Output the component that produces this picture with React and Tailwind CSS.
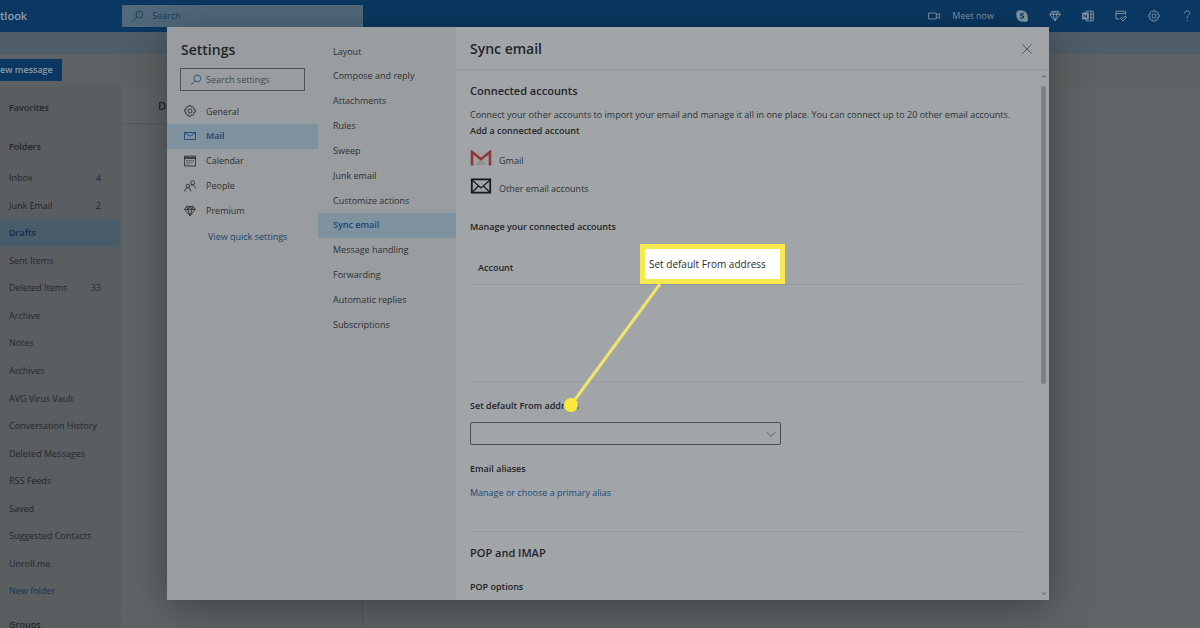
import React from 'react';

const folders = [
  { name: 'Inbox', count: 4, bold: true },
  { name: 'Junk Email', count: 2 },
  { name: 'Drafts', active: true },
  { name: 'Sent Items' },
  { name: 'Deleted Items', count: 33, dark: true },
  { name: 'Archive' },
  { name: 'Notes' },
  { name: 'Archives' },
  { name: 'AVG Virus Vault' },
  { name: 'Conversation History' },
  { name: 'Deleted Messages' },
  { name: 'RSS Feeds' },
  { name: 'Saved' },
  { name: 'Suggested Contacts' },
  { name: 'Unroll.me' },
  { name: 'New folder', link: true },
];

const mailSections = [
  'Layout',
  'Compose and reply',
  'Attachments',
  'Rules',
  'Sweep',
  'Junk email',
  'Customize actions',
  'Sync email',
  'Message handling',
  'Forwarding',
  'Automatic replies',
  'Subscriptions',
];

const Icon = ({ children, className = 'w-3 h-3', ...rest }) => (
  <svg viewBox="0 0 12 12" fill="none" stroke="currentColor" strokeWidth="0.9" className={`shrink-0 ${className}`} aria-hidden="true" {...rest}>
    {children}
  </svg>
);

const SearchIcon = ({ className }) => (
  <Icon className={className}>
    <circle cx="7.4" cy="4.4" r="3.4" />
    <path d="M5 6.8 0.8 11.2" />
  </Icon>
);

const GearIcon = ({ className }) => (
  <Icon className={className}>
    <path d="M5 0.7h2l.4 1.4 1.2-.7 1.5 1.4-.7 1.3 1.9.7v2.1l-1.8.7.7 1.3-1.5 1.5-1.3-.7-.5 1.6h-2l-.5-1.6-1.3.7-1.5-1.5.7-1.3L.7 6.9V4.8l1.7-.7-.6-1.3 1.5-1.4 1.2.7z" strokeLinejoin="round" />
    <circle cx="6" cy="6" r="2" />
  </Icon>
);

const DiamondIcon = ({ className }) => (
  <Icon className={className}>
    <path d="M2.8 1.4h6.4L11.4 4.4 6 10.8.6 4.4zM.6 4.4h10.8M2.8 1.4 4 4.4l2 6.4 2-6.4 1.2-3M4 4.4 6 1.4l2 3" strokeLinejoin="round" />
  </Icon>
);

const MailIcon = () => (
  <Icon>
    <path d="M.5 2.5h11v7H.5zM.5 2.8 6 6.2l5.5-3.4" />
  </Icon>
);

const CalendarIcon = () => (
  <Icon>
    <path d="M.5 1.2h11V11H.5zM.5 3.5h11M.5 2.4h11" />
    <path d="M2.5 5.5h7M2.5 7.2h7M2.5 8.9h4" strokeDasharray="1 1" />
  </Icon>
);

const PeopleIcon = () => (
  <Icon>
    <circle cx="8.6" cy="2.8" r="2" />
    <circle cx="3.8" cy="6" r="1.8" />
    <path d="M.8 11.5c0-4.800 6-4.800 6 0M6.800 5.700c2-1.500 4.500-.2 4.500 2.900" />
  </Icon>
);

const settingsNav = [
  { name: 'General', icon: <GearIcon /> },
  { name: 'Mail', icon: <MailIcon />, active: true },
  { name: 'Calendar', icon: <CalendarIcon /> },
  { name: 'People', icon: <PeopleIcon /> },
  { name: 'Premium', icon: <DiamondIcon /> },
];

function TopBar() {
  return (
    <header className="h-8 flex items-center bg-[#0a3862] text-[#8397a5] shrink-0">
      <div className="w-[122px] text-[11px] font-semibold text-[#8fa0ad]">tlook</div>
      <label className="w-[241px] h-[22px] flex items-center gap-2 pl-[10px] bg-[#51697b] text-[#193b5a]">
        <SearchIcon />
        <input type="text" placeholder="Search" aria-label="Search" className="flex-1 min-w-0 bg-transparent text-[9px] placeholder:text-[#193b5a] outline-none" />
      </label>
      <div className="flex-1 flex items-center justify-end pr-[7px]">
        <button className="flex items-center gap-3 text-[9px] mr-[22px]">
          <Icon>
            <path d="M.5 3h7.8v6H.5zM8.300 5.300 11.500 3.500v5L8.300 6.700" />
          </Icon>
          Meet now
        </button>
        <div className="flex items-center gap-[21px]">
          <button aria-label="Skype">
            <Icon>
              <path d="M3.500.8A5 5 0 0 1 6 1a5 5 0 0 1 5 6 2.800 2.800 0 0 1-4 4A5 5 0 0 1 1 5 2.800 2.800 0 0 1 3.500.8z" fill="currentColor" />
              <path d="M7.700 4.400C7 3.300 4.500 3.400 4.500 4.700c0 1.400 3.200.9 3.200 2.400 0 1.400-2.700 1.500-3.400.3" stroke="#0a3862" strokeWidth="1.100" />
            </Icon>
          </button>
          <button aria-label="Premium"><DiamondIcon /></button>
          <button aria-label="OneNote">
            <Icon>
              <path d="M.3 3h6v6h-6z" fill="currentColor" />
              <path d="M2 7.700V4.400l2.500 3.200V4.300" stroke="#0a3862" />
              <path d="M4 2.800V1.200h7.300v9.600H4V9.200M8.800 1.200v9.600M8.800 4.400h2.500M8.800 7.600h2.500" />
            </Icon>
          </button>
          <button aria-label="My Day">
            <Icon>
              <path d="M4.500 9H1V1.200h9.500v3.300M1 3.500h9.500M5.500 8.500l2.500 2.700 3.500-4.200-1.500-1L8 8.500 6.500 7.300z" />
            </Icon>
          </button>
          <button aria-label="Settings"><GearIcon /></button>
          <button aria-label="Help">
            <Icon>
              <path d="M3.500 3.500C3.500 0 8.800 0 8.800 3.300 8.800 5.500 6 5.500 6 8.500M6 10.200v1.200" />
            </Icon>
          </button>
        </div>
      </div>
    </header>
  );
}

function Mailbox() {
  return (
    <div className="flex-1 min-h-0 flex flex-col">
      <div className="h-[22px] bg-[#4f5d68] shrink-0" />
      <div className="h-8 flex items-center bg-[#5f6264] shrink-0">
        <button className="h-[22px] w-[62px] text-left bg-[#0a3862] text-[#8c9ca8] text-[9px] font-semibold whitespace-nowrap">ew message</button>
      </div>
      <div className="flex-1 min-h-0 flex">
        <aside className="w-[122px] shrink-0 bg-[#5a5e60] text-[9px] text-[#24282b] border-r border-[#5f6365]">
          <h2 className="h-[43px] pl-[9px] flex items-center font-semibold">Favorites</h2>
          <h2 className="h-[35px] pl-[9px] flex items-center font-semibold">Folders</h2>
          <ul className="mr-px grid auto-rows-fr h-[441px]">
            {folders.map((f) => (
              <li key={f.name} className={`flex items-center justify-between pl-[9px] pr-[19px] ${f.active ? 'bg-[#485c6a] text-[#102f4d] font-semibold' : ''}`}>
                <span className={f.link ? 'text-[#17364f]' : 'whitespace-nowrap'}>{f.name}</span>
                {f.count && <span className={f.bold ? 'font-semibold text-[#17364f]' : f.dark ? 'text-[#17304a]' : ''}>{f.count}</span>}
              </li>
            ))}
          </ul>
          <h2 className="h-10 pl-[9px] flex items-center font-semibold">Groups</h2>
        </aside>
        <section className="w-[241px] border-r border-[#565a5c] bg-[#606466]">
          <div className="h-[38px] pt-1 flex items-center pl-9 border-b border-[#55595b] text-[11px] font-semibold text-[#202427]">Drafts</div>
        </section>
        <section className="flex-1 bg-[#606466]" />
      </div>
    </div>
  );
}

function SettingsNav() {
  return (
    <div className="w-[151px] shrink-0">
      <h1 className="h-[41px] pt-1 pl-[14px] flex items-center text-[14px] font-semibold text-[#1f2426]">Settings</h1>
      <label className="ml-[13px] w-[125px] h-[23px] flex items-center gap-1 pl-[9px] border border-[#4d5153] text-[#24527d]">
        <SearchIcon />
        <input type="text" placeholder="Search settings" aria-label="Search settings" className="flex-1 min-w-0 bg-transparent text-[9px] placeholder:text-[#43484a] outline-none" />
      </label>
      <ul className="mt-2 grid auto-rows-fr h-[124px] text-[9px] text-[#2c3133]">
        {settingsNav.map((item) => (
          <li key={item.name} className={item.active ? 'bg-[#7e92a0] text-[#1a4672] font-semibold' : ''}>
            <button className="w-full h-full flex items-center gap-[10px] pl-[17px]">
              {item.icon}
              {item.name}
            </button>
          </li>
        ))}
      </ul>
      <a href="#quick" className="block mt-[7px] ml-[41px] text-[9px] text-[#1c456c]">View quick settings</a>
    </div>
  );
}

function MailSections() {
  return (
    <ul className="w-[138px] shrink-0 mt-3 grid auto-rows-fr h-[298px] text-[9px] text-[#2c3133]">
      {mailSections.map((name) => (
        <li key={name} className={name === 'Sync email' ? 'bg-[#7e92a0] text-[#1a4672] font-semibold' : ''}>
          <button className="w-full h-full pl-[15px] text-left">{name}</button>
        </li>
      ))}
    </ul>
  );
}

function SyncEmail() {
  return (
    <div className="flex-1 min-w-0 flex flex-col bg-[#a1a5a8] text-[9px] leading-4 text-[#2c3133]">
      <div className="h-[43px] pt-[2px] shrink-0 flex items-center justify-between pl-[14px] pr-4 border-b border-[#8f9396]">
        <h2 className="text-[14px] font-semibold text-[#1f2426]">Sync email</h2>
        <button aria-label="Close" className="text-[#4a4f51]">
          <Icon>
            <path d="M1.500 1.500l9 9M10.500 1.500l-9 9" />
          </Icon>
        </button>
      </div>
      <div className="flex-1 min-h-0 flex">
        <div className="flex-1 min-w-0 overflow-hidden pl-[14px] pr-[15px]">
          <h3 className="mt-[13px] text-[11px] leading-4 font-semibold text-[#1f2426]">Connected accounts</h3>
          <p className="mt-2 whitespace-nowrap">
            Connect your other accounts to import your email and manage it all in one place. You can connect up to 20 other email accounts.
          </p>
          <h4 className="font-semibold text-[#1f2426]">Add a connected account</h4>
          <a href="#gmail" className="mt-[11px] h-7 flex items-start gap-[7px]">
            <svg viewBox="0 0 22 16" className="w-[22px] h-4" aria-hidden="true">
              <path d="M2 1.500h18V15H2z" fill="#a3a09f" />
              <path d="M5 15 11 9l6 6z" fill="#8e9193" />
              <path d="M2 15.500V2l9 7.200L20 2v13.500" fill="none" stroke="#8a3b39" strokeWidth="2.600" />
            </svg>
            <span className="pt-[3px]">Gmail</span>
          </a>
          <a href="#other" className="h-7 flex items-start gap-[7px]">
            <svg viewBox="0 0 22 16" className="w-[22px] h-4" fill="none" stroke="#14191d" aria-hidden="true">
              <path d="M1.800 1.300h18.400v13.400H1.800z" strokeWidth="1.800" />
              <path d="M2 2l9 8 9-8M2.500 14l6-6M19.500 14l-6-6" strokeWidth="1.200" />
            </svg>
            <span className="pt-[3px]">Other email accounts</span>
          </a>
          <h4 className="mt-[13px] font-semibold text-[#1f2426]">Manage your connected accounts</h4>
          <table className="w-full mt-[18px]">
            <thead>
              <tr className="border-b border-[#95999c]">
                <th className="h-[31px] pl-2 text-left font-semibold text-[#1f2426]">Account</th>
              </tr>
            </thead>
            <tbody>
              <tr className="border-b border-[#95999c]">
                <td className="h-[97px]" />
              </tr>
            </tbody>
          </table>
          <label htmlFor="from" className="block mt-4 font-semibold text-[#1f2426]">Set default From address</label>
          <div className="relative mt-2 w-[311px]">
            <select id="from" className="w-full h-[23px] appearance-none border border-[#4a4e51] rounded-xs bg-transparent" />
            <Icon className="absolute right-1 top-[6px] w-3 h-3 pointer-events-none text-[#5e6265]">
              <path d="M1.500 4 6 8.300 10.500 4" />
            </Icon>
          </div>
          <h4 className="mt-4 font-semibold text-[#1f2426]">Email aliases</h4>
          <a href="#alias" className="block mt-2 text-[#174a7c]">Manage or choose a primary alias</a>
          <h3 className="mt-[30px] pt-[13px] border-t border-[#95999c] text-[11px] leading-4 font-semibold text-[#1f2426]">POP and IMAP</h3>
          <h4 className="mt-[18px] font-semibold text-[#1f2426]">POP options</h4>
        </div>
        <div className="w-[11px] shrink-0 flex flex-col items-center justify-between py-1 text-[#7c8083]">
          <svg viewBox="0 0 6 4" className="w-[6px] h-1" fill="currentColor" aria-hidden="true"><path d="M0 3.500 3 .5l3 3z" /></svg>
          <div className="flex-1 pt-2"><div className="w-[5px] h-[298px] rounded-full bg-[#7c8083]" /></div>
          <svg viewBox="0 0 6 4" className="w-[6px] h-1" fill="currentColor" aria-hidden="true"><path d="M0 .5l3 3 3-3z" /></svg>
        </div>
      </div>
    </div>
  );
}

// yellow label with a pointer to the From address field
function Callout() {
  return (
    <div className="absolute left-[563px] top-[244px] pl-[77px]">
      <svg viewBox="0 0 100 170" className="absolute left-0 top-0 w-[100px] h-[170px]" aria-hidden="true">
        <path d="M97 40 8 161" stroke="#efe56b" strokeWidth="3" />
        <circle cx="8" cy="161" r="7" fill="#fbea3c" />
      </svg>
      <div className="relative w-[145px] h-10 flex items-center pl-1 border-[5px] border-[#f5e94f] bg-white text-[10px] font-medium text-[#2b2b2b] whitespace-nowrap">
        Set default From address
      </div>
    </div>
  );
}

export default function App() {
  return (
    <div className="relative h-screen overflow-hidden flex flex-col font-['Open_Sans','Noto_Sans',sans-serif]">
      <TopBar />
      <Mailbox />
      <div className="absolute inset-0 flex pt-[27px] pb-7 pl-[167px] pr-[151px]">
        <div role="dialog" aria-label="Settings" className="flex-1 min-w-0 flex bg-[#999d9f] shadow-[0_8px_40px_rgba(0,0,0,0.35)]">
          <SettingsNav />
          <MailSections />
          <SyncEmail />
        </div>
      </div>
      <Callout />
    </div>
  );
}
